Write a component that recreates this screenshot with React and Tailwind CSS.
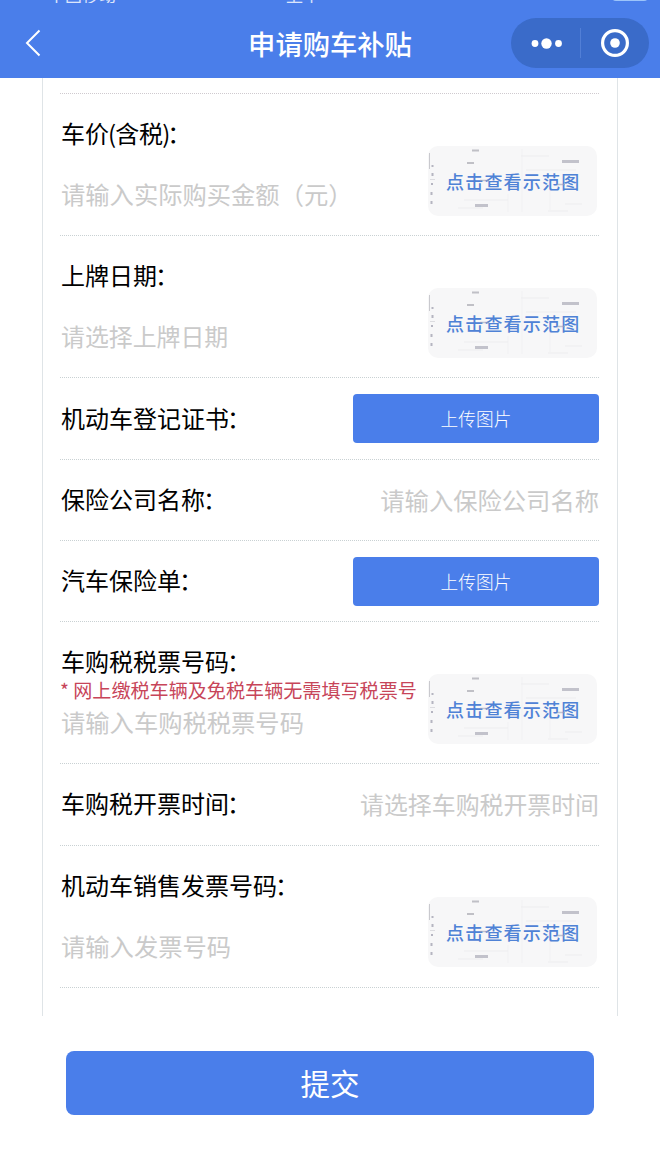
const rows = [
  { type: "sample", label: "车价(含税)", placeholder: "请输入实际购买金额（元）" },
  { type: "sample", label: "上牌日期", placeholder: "请选择上牌日期", picker: true },
  { type: "upload", label: "机动车登记证书" },
  { type: "input", label: "保险公司名称", placeholder: "请输入保险公司名称" },
  { type: "upload", label: "汽车保险单" },
  {
    type: "sample",
    label: "车购税税票号码",
    placeholder: "请输入车购税税票号码",
    note: "* 网上缴税车辆及免税车辆无需填写税票号",
  },
  { type: "input", label: "车购税开票时间", placeholder: "请选择车购税开票时间", picker: true },
  { type: "sample", label: "机动车销售发票号码", placeholder: "请输入发票号码" },
];

function StatusBar() {
  return (
    <div className="flex h-[3px] items-end overflow-hidden pl-12 pr-3 text-[17px] leading-none text-white/80">
      <span className="w-[238px] shrink-0">中国移动</span>
      <span className="flex-1">上午</span>
      <span className="mb-[2px] h-4 w-9 rounded bg-[#9cc4fa]" />
    </div>
  );
}

function Header() {
  return (
    <header className="h-[78px] bg-[#4a7eea] text-white">
      <StatusBar />
      <div className="grid h-[75px] grid-cols-[248px_164px_1fr] items-start">
        <svg className="ml-[25px] mt-[26px] h-7 w-4" viewBox="0 0 16 28" fill="none">
          <path d="M14.500 1.500L2 14l12.500 12.500" stroke="#fff" strokeWidth="2" />
        </svg>
        <h1 className="mt-5 whitespace-nowrap text-center text-[27.3px] font-medium leading-10">
          申请购车补贴
        </h1>
        <div className="ml-[99px] mt-[15px] flex h-[50px] w-[138px] items-center rounded-full bg-[#3a6bc9]">
          <svg className="h-[50px] w-[138px]" viewBox="0 0 138 50" fill="none">
            <circle cx="24" cy="25.5" r="3.4" fill="#fff" />
            <circle cx="35.5" cy="25.5" r="5.2" fill="#fff" />
            <circle cx="47.5" cy="25.5" r="3.4" fill="#fff" />
            <path d="M69.5 10v30" stroke="#527fd6" />
            <circle cx="104" cy="25" r="12.4" stroke="#fff" strokeWidth="3.2" />
            <circle cx="104" cy="25" r="4.8" fill="#fff" />
          </svg>
        </div>
      </div>
    </header>
  );
}

function SampleButton() {
  return (
    <button className="relative mr-0.5 h-[70px] w-[169px] shrink-0 overflow-hidden rounded-[10px] bg-[#f7f7f8]">
      {/* faded document behind the caption */}
      <svg className="absolute inset-0 h-full w-full" viewBox="0 0 169 70" fill="none">
        <path d="M1.500 7v16" stroke="#c9c9ce" />
        <path d="M94 3v63M80 48v18M122 42v22" stroke="#f1f1f3" />
        <path d="M36 54h44M30 62h25M98 24h50M120 65h20M137 58h17M93 10h28" stroke="#ededef" />
        <path d="M4.500 19v2M4.500 27v3M4 37v2M3.500 46v3M3.500 55v3" stroke="#b5b5c1" strokeWidth="2" />
        <path d="M2 33.500h5" stroke="#dcdce0" />
        <path d="M44 4.500h7M39 17h7" stroke="#c0c0c6" strokeWidth="2" />
        <path d="M134 15.500h17M47 59.500h13" stroke="#c2c2cb" strokeWidth="3" />
      </svg>
      <span className="relative block whitespace-nowrap pl-[18px] text-left text-[18px] font-medium leading-[70px] tracking-[1.2px] text-[#4f82d6]">
        点击查看示范图
      </span>
      <svg className="absolute inset-0 h-full w-full" viewBox="0 0 169 70" fill="none">
        <path d="M52 34.500h9M129 38.500h8" stroke="#9a9db5" strokeOpacity=".6" strokeWidth="1.5" />
      </svg>
    </button>
  );
}

function Placeholder({ picker, children }) {
  return (
    <span
      className={`whitespace-nowrap leading-8 text-[#cacaca] ${picker ? "text-[23.9px]" : "text-[24.3px]"}`}
    >
      {children}
    </span>
  );
}

function Label({ text }) {
  return (
    <span className="whitespace-nowrap text-[24px] leading-8 text-black">
      {text.split(/([()])/).map((part, i) =>
        part === "(" || part === ")" ? (
          <span key={i} className="-mx-px">
            {part}
          </span>
        ) : (
          part
        )
      )}
      <span className="-ml-0.5">：</span>
    </span>
  );
}

function SampleRow({ label, placeholder, note, picker }) {
  return (
    <div className="flex h-[142px] items-start justify-between border-b border-dotted border-[#c9d1d3] pt-[23px]">
      <div className="flex w-[366px] flex-col pl-px">
        <Label text={label} />
        <span className="-ml-px h-[29px] whitespace-nowrap pt-px text-[19.1px] leading-[25px] text-[#c74559]">
          {note}
        </span>
        <Placeholder picker={picker}>{placeholder}</Placeholder>
      </div>
      <div className="pt-[28.6px]">
        <SampleButton />
      </div>
    </div>
  );
}

function FormRow({ type, label, placeholder, picker }) {
  return (
    <div className="flex h-[81.3px] items-center justify-between border-b border-dotted border-[#c9d1d3] pl-px">
      <div className="-mt-0.5 flex">
        <Label text={label} />
      </div>
      {type === "upload" ? (
        <button className="h-[49px] w-[246px] rounded bg-[#4a7eea] text-[17.7px] font-light text-white">
          上传图片
        </button>
      ) : (
        <Placeholder picker={picker}>{placeholder}</Placeholder>
      )}
    </div>
  );
}

export default function App() {
  return (
    <div className="h-[1150px] w-[660px] overflow-hidden bg-white font-['Noto_Sans_CJK_SC','Liberation_Sans',sans-serif]">
      <Header />
      <main className="mx-auto h-[938px] w-[576px] border-x border-[#dfe4e7] pl-[17px] pr-[18px] pt-[15.4px]">
        <div className="border-t border-dotted border-[#cfcacf]">
          {rows.map((row) =>
            row.type === "sample" ? (
              <SampleRow key={row.label} {...row} />
            ) : (
              <FormRow key={row.label} {...row} />
            )
          )}
        </div>
      </main>
      <div className="px-[66px] pt-[35px]">
        <button className="h-16 w-full rounded-lg bg-[#4a7eea] pb-0.5 text-[29.5px] text-white">提交</button>
      </div>
    </div>
  );
}
